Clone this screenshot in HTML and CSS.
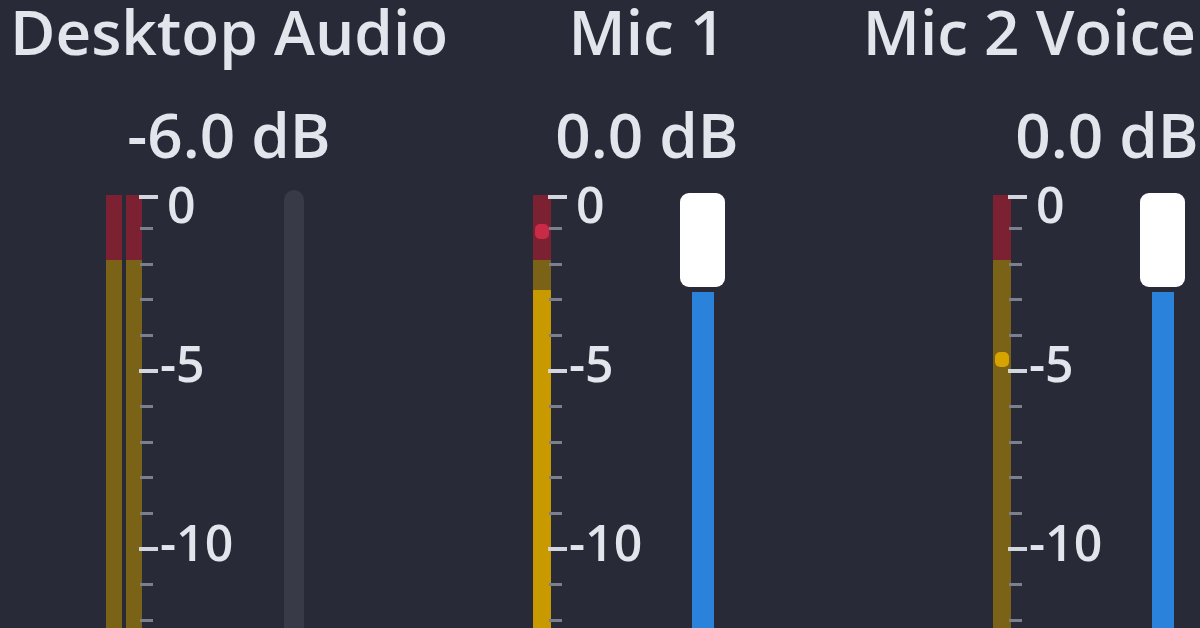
FILE: index.html
```html
<!DOCTYPE html>
<html lang="en">
<head>
<meta charset="UTF-8">
<meta name="viewport" content="width=device-width, initial-scale=1.0">
<title>Audio Mixer</title>
<link rel="stylesheet" href="styles.css">
</head>
<body>
<div class="mixer">

  <!-- Desktop Audio (stereo, slider at -6 dB) -->
  <div class="channel ch-desktop">
    <div class="name">Desktop Audio</div>
    <div class="volume">-6.0 dB</div>
    <div class="strip">
      <div class="meter">
        <div class="bar"></div>
        <div class="bar"></div>
      </div>
      <div class="scale">
        <div class="minor-ticks"></div>
        <div class="tick" style="top:4.5px"></div>
        <div class="tick" style="top:179px"></div>
        <div class="tick" style="top:357px"></div>
        <div class="label label-zero" style="top:-10.6px">0</div>
        <div class="label" style="top:148px">-5</div>
        <div class="label" style="top:327px">-10</div>
      </div>
      <div class="slider">
        <div class="groove"></div>
      </div>
    </div>
  </div>

  <!-- Mic 1 (mono, peaking) -->
  <div class="channel ch-mic1">
    <div class="name">Mic 1</div>
    <div class="volume">0.0 dB</div>
    <div class="strip">
      <div class="meter">
        <div class="bar bar-active">
          <div class="peak peak-red" style="top:29px"></div>
        </div>
      </div>
      <div class="scale">
        <div class="minor-ticks"></div>
        <div class="tick" style="top:4.5px"></div>
        <div class="tick" style="top:179px"></div>
        <div class="tick" style="top:357px"></div>
        <div class="label label-zero" style="top:-10.6px">0</div>
        <div class="label" style="top:148px">-5</div>
        <div class="label" style="top:327px">-10</div>
      </div>
      <div class="slider">
        <div class="handle"></div>
        <div class="fill"></div>
      </div>
    </div>
  </div>

  <!-- Mic 2 Voice Chat (mono, quiet) -->
  <div class="channel ch-mic2">
    <div class="name">Mic 2 Voice Chat</div>
    <div class="volume">0.0 dB</div>
    <div class="strip">
      <div class="meter">
        <div class="bar">
          <div class="peak peak-yellow" style="top:157px"></div>
        </div>
      </div>
      <div class="scale">
        <div class="minor-ticks"></div>
        <div class="tick" style="top:4.5px"></div>
        <div class="tick" style="top:179px"></div>
        <div class="tick" style="top:357px"></div>
        <div class="label label-zero" style="top:-10.6px">0</div>
        <div class="label" style="top:148px">-5</div>
        <div class="label" style="top:327px">-10</div>
      </div>
      <div class="slider">
        <div class="handle"></div>
        <div class="fill"></div>
      </div>
    </div>
  </div>

</div>
</body>
</html>
```

FILE: styles.css
```css
body {
  margin: 0;
  padding: 0;
  background-color: #282b37;
  color: #e2e5eb;
  font-family: "Open Sans", "Noto Sans", sans-serif;
  overflow: hidden;
}

.mixer {
  display: flex;
  height: 628px;
  overflow: hidden;
}

.channel {
  flex: none;
  display: flex;
  flex-direction: column;
  align-items: center;
  height: 100%;
}

.ch-desktop { width: 458px; }
.ch-mic1 { width: 378px; }
.ch-mic2 { width: 542px; }

.name, .volume {
  font-size: 62px;
  font-weight: 600;
  line-height: 62px;
  white-space: nowrap;
}

.volume {
  margin-top: 41px;
}

.strip {
  flex: 1;
  display: flex;
  margin-top: 25px;
  margin-right: 36px;
}

/* level meter */
.meter {
  display: flex;
  gap: 4px;
  margin-top: 5px;
}

.bar {
  position: relative;
  width: 16px;
  background: linear-gradient(to bottom, #7b2131 0, #7b2131 65px, #7a6217 65px);
}

.ch-mic1 .bar, .ch-mic2 .bar {
  width: 18px;
}

.bar-active {
  background: linear-gradient(to bottom, #7b2131 0, #7b2131 65px, #7a6217 65px, #7a6217 95px, #c89a00 95px);
}

.peak {
  position: absolute;
  left: 2px;
  right: 2px;
  height: 15px;
  border-radius: 5px;
}

.peak-red { background-color: #c92b47; }
.peak-yellow { background-color: #d6a300; }

/* dB scale */
.scale {
  position: relative;
  width: 129px;
}

.minor-ticks {
  position: absolute;
  top: 36.7px;
  bottom: 0;
  left: -2px;
  width: 13px;
  background: repeating-linear-gradient(to bottom, #7c808c 0, #7c808c 3px, transparent 3px, transparent 35.6px);
}

.tick {
  position: absolute;
  left: -3px;
  width: 19px;
  height: 4px;
  background-color: #d3d6dc;
}

.label {
  position: absolute;
  left: 18px;
  font-size: 50px;
  font-weight: 600;
  line-height: 50px;
}

.label-zero {
  left: 25px;
}

/* volume slider */
.slider {
  width: 45px;
  display: flex;
  flex-direction: column;
  align-items: center;
}

.groove {
  flex: 1;
  width: 20px;
  border-radius: 10px 10px 0 0;
  background-color: #383b47;
}

.handle {
  width: 45px;
  height: 94px;
  margin-top: 3px;
  border-radius: 9px;
  background-color: #ffffff;
}

.fill {
  flex: 1;
  width: 22px;
  margin-top: 5px;
  background-color: #2b82da;
}
```
